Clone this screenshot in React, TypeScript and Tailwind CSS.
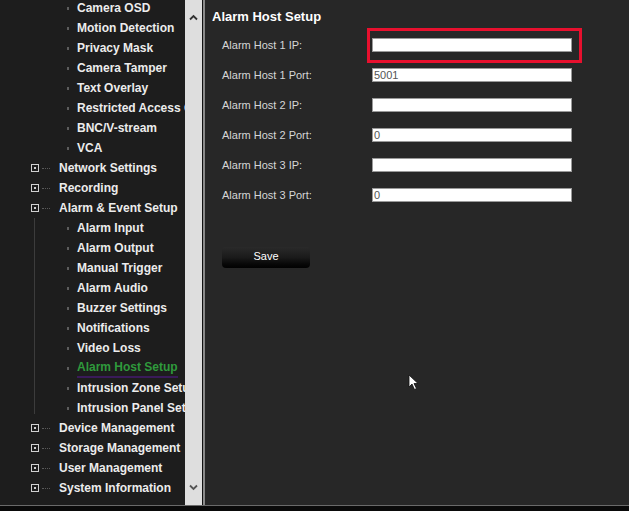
import React from 'react';

type Node = { label: string; level: 0 | 1; active?: boolean };

const before: Node[] = [
  { label: 'Camera OSD', level: 1 },
  { label: 'Motion Detection', level: 1 },
  { label: 'Privacy Mask', level: 1 },
  { label: 'Camera Tamper', level: 1 },
  { label: 'Text Overlay', level: 1 },
  { label: 'Restricted Access C', level: 1 },
  { label: 'BNC/V-stream', level: 1 },
  { label: 'VCA', level: 1 },
  { label: 'Network Settings', level: 0 },
  { label: 'Recording', level: 0 },
  { label: 'Alarm & Event Setup', level: 0 },
];

const alarmChildren: Node[] = [
  { label: 'Alarm Input', level: 1 },
  { label: 'Alarm Output', level: 1 },
  { label: 'Manual Trigger', level: 1 },
  { label: 'Alarm Audio', level: 1 },
  { label: 'Buzzer Settings', level: 1 },
  { label: 'Notifications', level: 1 },
  { label: 'Video Loss', level: 1 },
  { label: 'Alarm Host Setup', level: 1, active: true },
  { label: 'Intrusion Zone Setup', level: 1 },
  { label: 'Intrusion Panel Setup', level: 1 },
];

const after: Node[] = [
  { label: 'Device Management', level: 0 },
  { label: 'Storage Management', level: 0 },
  { label: 'User Management', level: 0 },
  { label: 'System Information', level: 0 },
];

const fields = [
  { label: 'Alarm Host 1 IP:', value: '' },
  { label: 'Alarm Host 1 Port:', value: '5001' },
  { label: 'Alarm Host 2 IP:', value: '' },
  { label: 'Alarm Host 2 Port:', value: '0' },
  { label: 'Alarm Host 3 IP:', value: '' },
  { label: 'Alarm Host 3 Port:', value: '0' },
];

const TreeRow = ({ node }: { node: Node }) => {
  if (node.level === 0) {
    return (
      <div className="flex h-5 items-center whitespace-nowrap">
        <div className="w-[31px] shrink-0" />
        <div className="flex h-[8px] w-[8px] shrink-0 items-center justify-center border border-[#d0d0d0]">
          <div className="h-[2px] w-[2px] bg-[#d0d0d0]" />
        </div>
        <div className="ml-[3px] w-[8px] shrink-0 border-t border-dotted border-[#5a5a5a]" />
        <span className="ml-[9px] text-[12px] font-bold text-[#ececec]">{node.label}</span>
      </div>
    );
  }
  return (
    <div className="flex h-5 items-center whitespace-nowrap">
      <div className="w-[67px] shrink-0" />
      <div className="h-[3px] w-[2px] shrink-0 bg-[#5c5c5c]" />
      <span
        className={
          node.active
            ? 'ml-[8px] border-b-2 border-[#3a1a5a] text-[12px] font-bold text-[#2f9a3c]'
            : 'ml-[8px] text-[12px] font-bold text-[#ececec]'
        }
      >
        {node.label}
      </span>
    </div>
  );
};

const Cursor = () => (
  <svg width="11" height="17" viewBox="0 0 11 17" className="absolute left-[408px] top-[374px]">
    <path d="M1 1 L1 13 L4 10 L6.5 15.5 L8.5 14.5 L6 9.5 L10 9.5 Z" fill="#ffffff" stroke="#111111" strokeWidth="0.8" />
  </svg>
);

export default function App() {
  return (
    <div
      className="relative flex h-[511px] w-[629px] flex-col overflow-hidden bg-black"
      style={{ fontFamily: '"Liberation Sans", Arial, sans-serif' }}
    >
      <div className="flex min-h-0 flex-1">
        {/* sidebar tree */}
        <div className="w-[185px] shrink-0 overflow-hidden bg-[#1d1d1d]">
          <div className="-mt-[2px]">
            {before.map((n) => (
              <TreeRow key={n.label} node={n} />
            ))}
            <div className="relative">
              <div className="absolute left-[34px] top-0 h-[196px] w-px bg-[#3c3c3c]" />
              {alarmChildren.map((n) => (
                <TreeRow key={n.label} node={n} />
              ))}
            </div>
            {after.map((n) => (
              <TreeRow key={n.label} node={n} />
            ))}
          </div>
        </div>

        {/* scrollbar */}
        <div className="flex w-[17px] shrink-0 flex-col items-center justify-between bg-[#dedede] py-[14px]">
          <svg width="9" height="7" viewBox="0 0 9 7">
            <path d="M1 5.5 L4.5 2 L8 5.5" fill="none" stroke="#333" strokeWidth="1.8" />
          </svg>
          <svg width="9" height="7" viewBox="0 0 9 7">
            <path d="M1 1.5 L4.5 5 L8 1.5" fill="none" stroke="#555" strokeWidth="1.8" />
          </svg>
        </div>
        <div className="w-[1px] shrink-0 bg-[#111]" />
        <div className="w-[2px] shrink-0 bg-[#8a8a8a]" />

        {/* main panel */}
        <div className="flex-1 bg-[#272727] pl-[7px]">
          <div className="h-[30px] pt-[9px] text-[13px] font-bold leading-4 text-white">Alarm Host Setup</div>
          {fields.map((f, i) => (
            <div key={f.label} className="flex h-[30px] items-center pl-[10px]">
              <div className="w-[150px] shrink-0 text-[11px] text-[#d6d6d6]">{f.label}</div>
              <div className="relative">
                <div className="flex h-[14px] w-[200px] items-center border border-[#9a9a9a] bg-white pl-[1px] text-[11px] leading-none text-[#555]">
                  {f.value}
                </div>
                {i === 0 && (
                  <div className="absolute -left-[5px] -top-[10px] h-[35px] w-[215px] border-[3px] border-[#e8102e]" />
                )}
              </div>
            </div>
          ))}
          <div className="ml-[10px] mt-[37px] flex h-[21px] w-[88px] justify-center rounded-sm bg-gradient-to-b from-[#2a2a2a] via-[#1a1a1a] to-[#020202] pt-[1px] text-[11px] text-white">
            Save
          </div>
        </div>
      </div>
      <div className="h-px bg-[#6a6a6a]" />
      <div className="h-[5px] bg-[#0a0a0a]" />
      <Cursor />
    </div>
  );
}
